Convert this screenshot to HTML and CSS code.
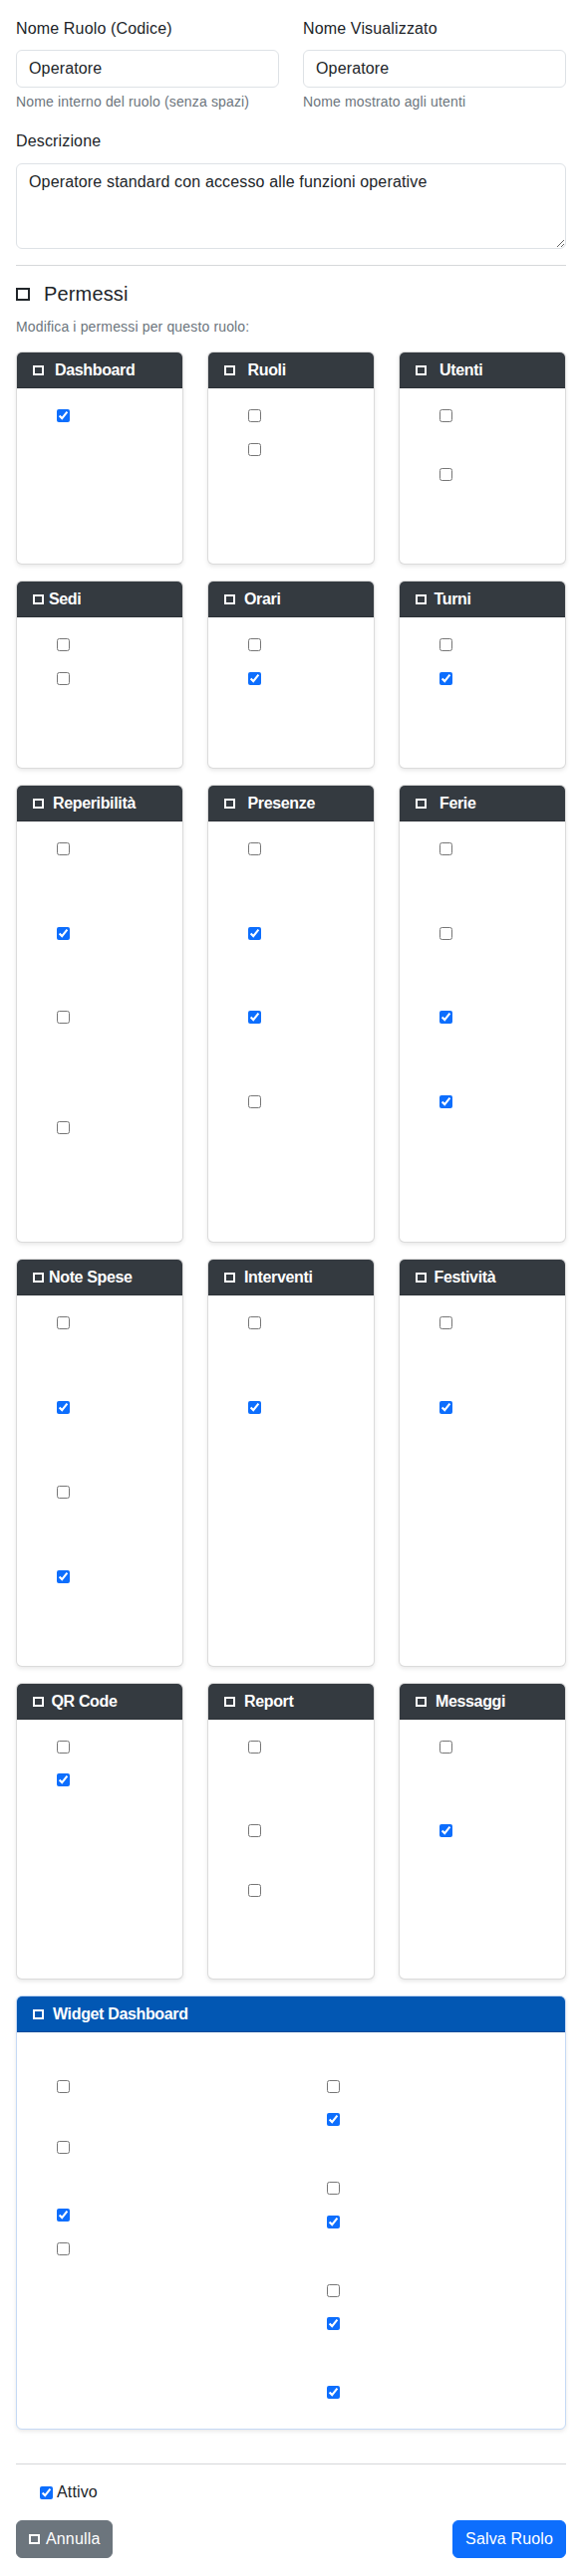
FILE: index.html
```html
<!DOCTYPE html>
<html lang="it">
<head>
<meta charset="utf-8">
<title>Modifica Ruolo</title>
<link rel="stylesheet" href="styles.css">
</head>
<body>
<div class="page">
  <div class="grid-2">
    <div class="field">
      <label class="label">Nome Ruolo (Codice)</label>
      <input class="control" type="text" value="Operatore">
      <div class="hint">Nome interno del ruolo (senza spazi)</div>
    </div>
    <div class="field">
      <label class="label">Nome Visualizzato</label>
      <input class="control" type="text" value="Operatore">
      <div class="hint">Nome mostrato agli utenti</div>
    </div>
  </div>

  <div class="field desc">
    <label class="label">Descrizione</label>
    <textarea class="control textarea" rows="3">Operatore standard con accesso alle funzioni operative</textarea>
  </div>

  <hr class="sep">

  <h5 class="section-title"><span class="box box-lg"></span>Permessi</h5>
  <p class="muted">Modifica i permessi per questo ruolo:</p>

  <div class="perm-grid">
    <!-- Row 1 -->
    <div class="card">
      <div class="card-header"><h6 class="card-title"><span class="box ico-11"></span>Dashboard</h6></div>
      <div class="card-body">
        <div class="perm"><input type="checkbox" checked></div>
      </div>
    </div>
    <div class="card">
      <div class="card-header"><h6 class="card-title"><span class="box ico-12"></span>Ruoli</h6></div>
      <div class="card-body">
        <div class="perm h34"><input type="checkbox"></div>
        <div class="perm"><input type="checkbox"></div>
      </div>
    </div>
    <div class="card">
      <div class="card-header"><h6 class="card-title"><span class="box ico-13"></span>Utenti</h6></div>
      <div class="card-body">
        <div class="perm h59"><input type="checkbox"></div>
        <div class="perm"><input type="checkbox"></div>
      </div>
    </div>

    <!-- Row 2 -->
    <div class="card">
      <div class="card-header"><h6 class="card-title"><span class="box ico-5"></span>Sedi</h6></div>
      <div class="card-body">
        <div class="perm h34"><input type="checkbox"></div>
        <div class="perm"><input type="checkbox"></div>
      </div>
    </div>
    <div class="card">
      <div class="card-header"><h6 class="card-title"><span class="box ico-9"></span>Orari</h6></div>
      <div class="card-body">
        <div class="perm h34"><input type="checkbox"></div>
        <div class="perm"><input type="checkbox" checked></div>
      </div>
    </div>
    <div class="card">
      <div class="card-header"><h6 class="card-title"><span class="box ico-7"></span>Turni</h6></div>
      <div class="card-body">
        <div class="perm h34"><input type="checkbox"></div>
        <div class="perm"><input type="checkbox" checked></div>
      </div>
    </div>

    <!-- Row 3 -->
    <div class="card">
      <div class="card-header"><h6 class="card-title"><span class="box ico-9"></span>Reperibilità</h6></div>
      <div class="card-body">
        <div class="perm h85"><input type="checkbox"></div>
        <div class="perm h84"><input type="checkbox" checked></div>
        <div class="perm h111"><input type="checkbox"></div>
        <div class="perm"><input type="checkbox"></div>
      </div>
    </div>
    <div class="card">
      <div class="card-header"><h6 class="card-title"><span class="box ico-12"></span>Presenze</h6></div>
      <div class="card-body">
        <div class="perm h85"><input type="checkbox"></div>
        <div class="perm h84"><input type="checkbox" checked></div>
        <div class="perm h85"><input type="checkbox" checked></div>
        <div class="perm"><input type="checkbox"></div>
      </div>
    </div>
    <div class="card">
      <div class="card-header"><h6 class="card-title"><span class="box ico-13"></span>Ferie</h6></div>
      <div class="card-body">
        <div class="perm h85"><input type="checkbox"></div>
        <div class="perm h84"><input type="checkbox"></div>
        <div class="perm h85"><input type="checkbox" checked></div>
        <div class="perm"><input type="checkbox" checked></div>
      </div>
    </div>

    <!-- Row 4 -->
    <div class="card">
      <div class="card-header"><h6 class="card-title"><span class="box ico-5"></span>Note Spese</h6></div>
      <div class="card-body">
        <div class="perm h85"><input type="checkbox"></div>
        <div class="perm h85"><input type="checkbox" checked></div>
        <div class="perm h85"><input type="checkbox"></div>
        <div class="perm"><input type="checkbox" checked></div>
      </div>
    </div>
    <div class="card">
      <div class="card-header"><h6 class="card-title"><span class="box ico-9"></span>Interventi</h6></div>
      <div class="card-body">
        <div class="perm h85"><input type="checkbox"></div>
        <div class="perm"><input type="checkbox" checked></div>
      </div>
    </div>
    <div class="card">
      <div class="card-header"><h6 class="card-title"><span class="box ico-7"></span>Festività</h6></div>
      <div class="card-body">
        <div class="perm h85"><input type="checkbox"></div>
        <div class="perm"><input type="checkbox" checked></div>
      </div>
    </div>

    <!-- Row 5 -->
    <div class="card">
      <div class="card-header"><h6 class="card-title"><span class="box ico-7"></span>QR Code</h6></div>
      <div class="card-body">
        <div class="perm h33"><input type="checkbox"></div>
        <div class="perm"><input type="checkbox" checked></div>
      </div>
    </div>
    <div class="card">
      <div class="card-header"><h6 class="card-title"><span class="box ico-9"></span>Report</h6></div>
      <div class="card-body">
        <div class="perm h84"><input type="checkbox"></div>
        <div class="perm h60"><input type="checkbox"></div>
        <div class="perm"><input type="checkbox"></div>
      </div>
    </div>
    <div class="card">
      <div class="card-header"><h6 class="card-title"><span class="box ico-9"></span>Messaggi</h6></div>
      <div class="card-body">
        <div class="perm h84"><input type="checkbox"></div>
        <div class="perm"><input type="checkbox" checked></div>
      </div>
    </div>
  </div>

  <div class="card widget">
    <div class="card-header widget-header"><h6 class="card-title"><span class="box ico-9"></span>Widget Dashboard</h6></div>
    <div class="card-body widget-body">
      <div class="widget-cols">
        <div class="widget-col">
          <div class="perm h61"><input type="checkbox"></div>
          <div class="perm h68"><input type="checkbox"></div>
          <div class="perm h34"><input type="checkbox" checked></div>
          <div class="perm"><input type="checkbox"></div>
        </div>
        <div class="widget-col">
          <div class="perm h33"><input type="checkbox"></div>
          <div class="perm h69"><input type="checkbox" checked></div>
          <div class="perm h34"><input type="checkbox"></div>
          <div class="perm h69"><input type="checkbox" checked></div>
          <div class="perm h33"><input type="checkbox"></div>
          <div class="perm h69"><input type="checkbox" checked></div>
          <div class="perm"><input type="checkbox" checked></div>
        </div>
      </div>
    </div>
  </div>

  <hr class="sep sep-bottom">

  <div class="check-line">
    <input type="checkbox" id="attivo" checked><label for="attivo">Attivo</label>
  </div>

  <div class="actions">
    <button class="btn btn-secondary" type="button"><span class="box ico-6"></span>Annulla</button>
    <button class="btn btn-primary" type="submit">Salva Ruolo</button>
  </div>
</div>
</body>
</html>
```

FILE: styles.css
```css
* {
  box-sizing: border-box;
}

html, body {
  margin: 0;
  padding: 0;
  background: #ffffff;
}

body {
  font-family: "Liberation Sans", Arial, Helvetica, sans-serif;
  font-size: 16px;
  line-height: 1.5;
  color: #212529;
  letter-spacing: 0.15px;
}

.page {
  padding: 17px 16px 16px;
}

.grid-2 {
  display: grid;
  grid-template-columns: 1fr 1fr;
  column-gap: 24px;
}

.field {
  display: flex;
  flex-direction: column;
}

.desc {
  margin-top: 17px;
}

.label {
  display: block;
  line-height: 24px;
  margin-bottom: 9px;
}

.control {
  display: block;
  width: 100%;
  height: 38px;
  padding: 6px 12px;
  font-family: inherit;
  font-size: 16px;
  line-height: 24px;
  letter-spacing: inherit;
  color: #212529;
  background: #ffffff;
  border: 1px solid #dee2e6;
  border-radius: 6px;
  outline: none;
}

.textarea {
  height: 86px;
  resize: vertical;
  margin-top: 1px;
}

.hint {
  margin-top: 4px;
  font-size: 14px;
  line-height: 21px;
  color: #6c757d;
}

.sep {
  border: 0;
  border-top: 1px solid #d6d8da;
  margin: 16px 0 16px;
  height: 0;
}

.section-title {
  margin: 0 0 11px;
  font-size: 20px;
  font-weight: 400;
  line-height: 24px;
}

.box {
  display: inline-block;
  width: 11px;
  height: 10px;
  border: 2px solid currentColor;
  vertical-align: baseline;
}

.box-lg {
  width: 14px;
  height: 13px;
  margin-right: 14px;
}

.ico-5 { margin-right: 5px; }
.ico-6 { margin-right: 6px; }
.ico-7 { margin-right: 7.5px; }
.ico-9 { margin-right: 9px; }
.ico-11 { margin-right: 11px; }
.ico-12 { margin-right: 12.5px; }
.ico-13 { margin-right: 13px; }

.muted {
  margin: 0 0 14px;
  font-size: 14px;
  line-height: 21px;
  color: #6c757d;
}

.perm-grid {
  display: grid;
  grid-template-columns: repeat(3, 1fr);
  grid-template-rows: 214px 189px 460px 410px 298px;
  column-gap: 24px;
  row-gap: 16px;
}

.card {
  display: flex;
  flex-direction: column;
  background: #ffffff;
  border: 1px solid rgba(0, 0, 0, 0.14);
  border-radius: 6px;
  box-shadow: 0 2px 4px rgba(0, 0, 0, 0.09);
  overflow: hidden;
}

.card-header {
  padding: 8px 16px;
  background: #343a40;
  color: #ffffff;
  border-bottom: 1px solid rgba(0, 0, 0, 0.14);
}

.card-title {
  margin: 0;
  font-size: 16px;
  font-weight: 700;
  line-height: 19.2px;
  letter-spacing: -0.35px;
}

.card-body {
  flex: 1;
  padding: 21px 16px 16px 40px;
}

.perm {
  height: 13px;
}

.perm input {
  display: block;
  margin: 0;
  width: 13px;
  height: 13px;
  accent-color: #0d6efd;
}

.h33 { height: 33px; }
.h34 { height: 34px; }
.h59 { height: 59px; }
.h60 { height: 60px; }
.h61 { height: 61px; }
.h68 { height: 68px; }
.h69 { height: 69px; }
.h84 { height: 84px; }
.h85 { height: 85px; }
.h111 { height: 111px; }

.widget {
  margin-top: 16px;
  border-color: #c5d9f5;
}

.widget-header {
  background: #0257b3;
}

.widget-body {
  padding: 48px 16px 30px 16px;
}

.widget-cols {
  display: grid;
  grid-template-columns: 1fr 1fr;
  column-gap: 24px;
}

.widget-col {
  padding-left: 24px;
}

.sep-bottom {
  margin-top: 34px;
}

.check-line {
  padding-left: 24px;
  line-height: 24px;
  height: 24px;
  margin-bottom: 16px;
}

.check-line input {
  display: inline-block;
  vertical-align: top;
  margin: 6px 4px 0 0;
  width: 13px;
  height: 13px;
  accent-color: #0d6efd;
}

.actions {
  display: flex;
  justify-content: space-between;
  align-items: center;
}

.btn {
  display: inline-block;
  height: 38px;
  padding: 6px 12px;
  font-family: inherit;
  font-size: 16px;
  line-height: 24px;
  letter-spacing: inherit;
  color: #ffffff;
  border: 1px solid transparent;
  border-radius: 6px;
  cursor: pointer;
}

.btn-secondary {
  background: #6c757d;
  border-color: #6c757d;
}

.btn-primary {
  background: #0d6efd;
  border-color: #0d6efd;
}
```
